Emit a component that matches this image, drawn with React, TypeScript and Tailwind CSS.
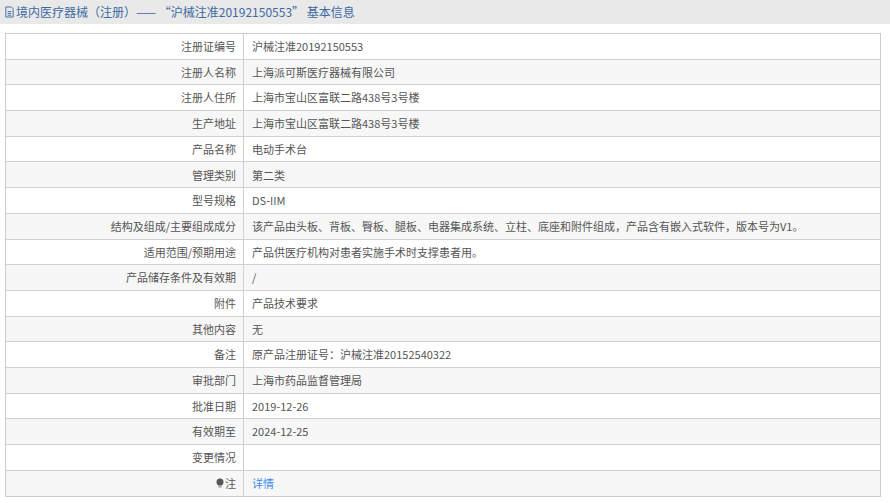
const rows: [string, string][] = [
  ["注册证编号", "沪械注准20192150553"],
  ["注册人名称", "上海派可斯医疗器械有限公司"],
  ["注册人住所", "上海市宝山区富联二路438号3号楼"],
  ["生产地址", "上海市宝山区富联二路438号3号楼"],
  ["产品名称", "电动手术台"],
  ["管理类别", "第二类"],
  ["型号规格", "DS-IIM"],
  ["结构及组成/主要组成成分", "该产品由头板、背板、臀板、腿板、电器集成系统、立柱、底座和附件组成，产品含有嵌入式软件，版本号为V1。"],
  ["适用范围/预期用途", "产品供医疗机构对患者实施手术时支撑患者用。"],
  ["产品储存条件及有效期", "/"],
  ["附件", "产品技术要求"],
  ["其他内容", "无"],
  ["备注", "原产品注册证号：沪械注准20152540322"],
  ["审批部门", "上海市药品监督管理局"],
  ["批准日期", "2019-12-26"],
  ["有效期至", "2024-12-25"],
  ["变更情况", ""],
];

export default function App() {
  return (
    <div className="w-[890px] h-[503px] bg-white text-[11px] text-[#555]" style={{ fontFamily: '"Noto Sans CJK SC", "Liberation Sans", sans-serif' }}>
      <div className="h-[24px] bg-[#e9e9e9] flex items-center pl-[4px] text-[12px] text-[#3d6aa3]">
        <svg width="11" height="12" viewBox="0 0 12 13" className="mr-[1px]"><path d="M2 1h6l2 2v9H2z" fill="none" stroke="#3d6aa3" strokeWidth="1"/><path d="M4 6h4M4 8h4M4 10h4" stroke="#3d6aa3"/></svg>
        境内医疗器械（注册）—— “沪械注准20192150553” 基本信息
      </div>
      <div className="mx-[5px] mt-[9px] w-[876px] border border-[#cccccc]">
        {rows.map(([k, v], i) => (
          <div key={i} className={`flex h-[25.7px] border-b border-[#d0d0d0] ${i % 2 ? "bg-[#f7f7f7]" : "bg-white"}`}>
            <div className="w-[238px] text-right pr-[7px] border-r border-[#d0d0d0] flex items-center justify-end">{k}</div>
            <div className="pl-[8px] flex items-center">{v}</div>
          </div>
        ))}
        <div className="flex h-[25px] bg-[#f7f7f7]">
          <div className="w-[238px] pr-[7px] border-r border-[#d0d0d0] flex items-center justify-end">
            <svg width="8" height="10" viewBox="0 0 8 10" className="mr-[1px]"><circle cx="4" cy="4" r="3.5" fill="#555"/><rect x="2.5" y="7" width="3" height="2.5" fill="#999"/></svg>注
          </div>
          <div className="pl-[8px] flex items-center text-[#3b8cf0]">详情</div>
        </div>
      </div>
    </div>
  );
}
